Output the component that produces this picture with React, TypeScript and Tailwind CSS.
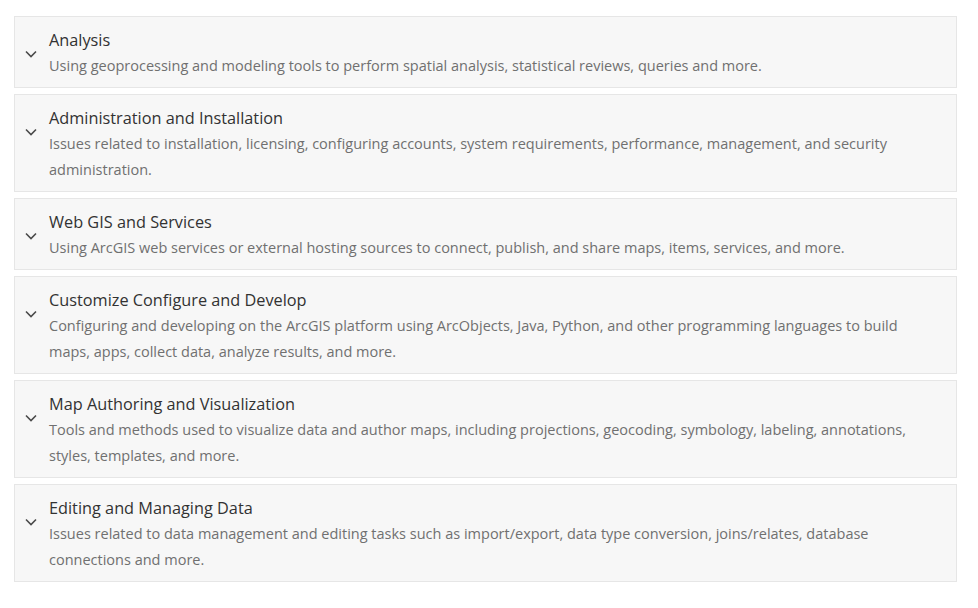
const items = [
  {
    title: 'Analysis',
    desc: 'Using geoprocessing and modeling tools to perform spatial analysis, statistical reviews, queries and more.',
  },
  {
    title: 'Administration and Installation',
    desc: 'Issues related to installation, licensing, configuring accounts, system requirements, performance, management, and security administration.',
  },
  {
    title: 'Web GIS and Services',
    desc: 'Using ArcGIS web services or external hosting sources to connect, publish, and share maps, items, services, and more.',
  },
  {
    title: 'Customize Configure and Develop',
    desc: 'Configuring and developing on the ArcGIS platform using ArcObjects, Java, Python, and other programming languages to build maps, apps, collect data, analyze results, and more.',
  },
  {
    title: 'Map Authoring and Visualization',
    desc: 'Tools and methods used to visualize data and author maps, including projections, geocoding, symbology, labeling, annotations, styles, templates, and more.',
  },
  {
    title: 'Editing and Managing Data',
    desc: 'Issues related to data management and editing tasks such as import/export, data type conversion, joins/relates, database connections and more.',
  },
];

function Chevron() {
  return (
    <svg width="12" height="8" viewBox="0 0 12 8" className="text-[#4a4a4a]">
      <path d="M1 1.5 L6 6.5 L11 1.5" fill="none" stroke="currentColor" strokeWidth="1.6" />
    </svg>
  );
}

export default function App() {
  return (
    <div className="w-[978px] h-[608px] bg-white pt-4 px-[14px] font-['Open_Sans',sans-serif]">
      <div className="w-[943px] flex flex-col gap-[6px]">
        {items.map((item) => (
          <div
            key={item.title}
            className="flex border border-[#e6e6e6] bg-[#f7f7f7] pt-[10px] pb-[8px] pr-[26px]"
          >
            <div className="w-[34px] shrink-0 pl-[10px] pt-[23px]">
              <Chevron />
            </div>
            <div className="flex-1">
              <div className="text-[16.3px] leading-[26px] text-[#323232]">{item.title}</div>
              <div className="text-[14.5px] leading-[26px] text-[#707070]">{item.desc}</div>
            </div>
          </div>
        ))}
      </div>
    </div>
  );
}
